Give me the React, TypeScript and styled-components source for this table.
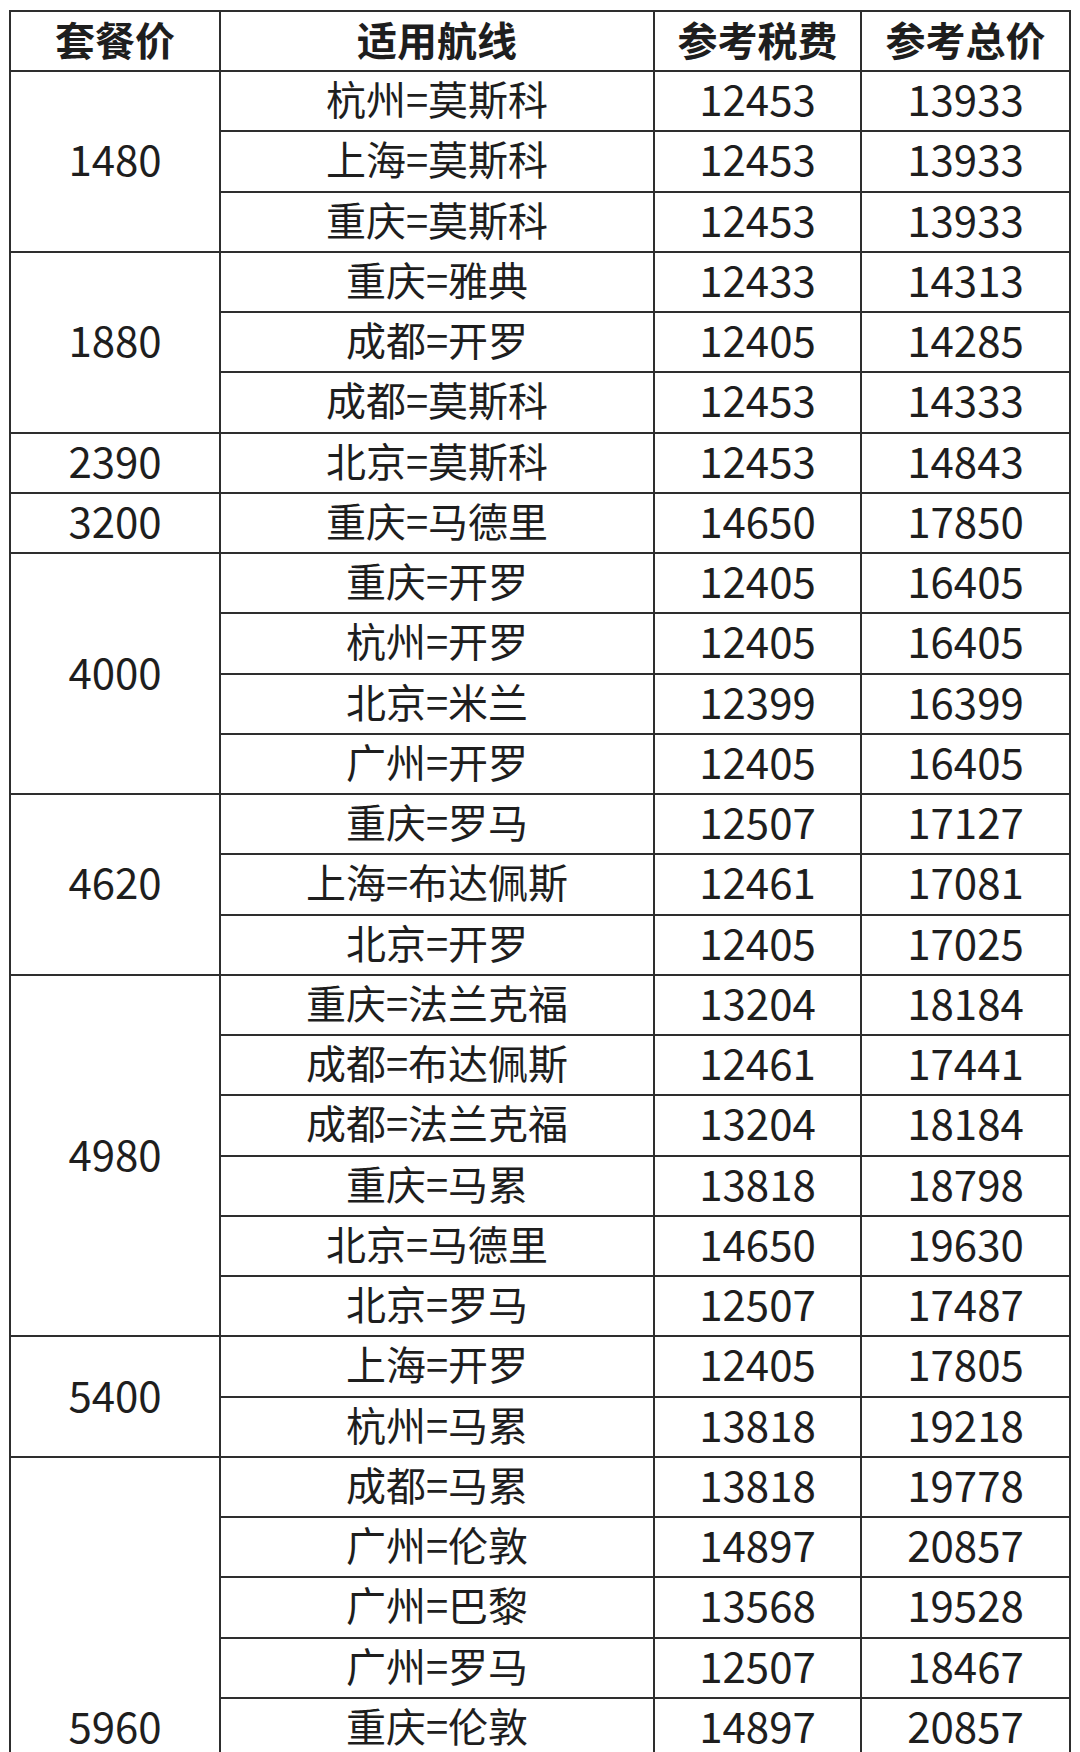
import React, { FunctionComponent } from 'react';
import styled, { createGlobalStyle } from 'styled-components';

type Route = { route: string; tax: number; total: number };
type Group = { price: number; span?: number; routes: Route[] };

const groups: Group[] = [
  {
    price: 1480,
    routes: [
      { route: '杭州=莫斯科', tax: 12453, total: 13933 },
      { route: '上海=莫斯科', tax: 12453, total: 13933 },
      { route: '重庆=莫斯科', tax: 12453, total: 13933 },
    ],
  },
  {
    price: 1880,
    routes: [
      { route: '重庆=雅典', tax: 12433, total: 14313 },
      { route: '成都=开罗', tax: 12405, total: 14285 },
      { route: '成都=莫斯科', tax: 12453, total: 14333 },
    ],
  },
  { price: 2390, routes: [{ route: '北京=莫斯科', tax: 12453, total: 14843 }] },
  { price: 3200, routes: [{ route: '重庆=马德里', tax: 14650, total: 17850 }] },
  {
    price: 4000,
    routes: [
      { route: '重庆=开罗', tax: 12405, total: 16405 },
      { route: '杭州=开罗', tax: 12405, total: 16405 },
      { route: '北京=米兰', tax: 12399, total: 16399 },
      { route: '广州=开罗', tax: 12405, total: 16405 },
    ],
  },
  {
    price: 4620,
    routes: [
      { route: '重庆=罗马', tax: 12507, total: 17127 },
      { route: '上海=布达佩斯', tax: 12461, total: 17081 },
      { route: '北京=开罗', tax: 12405, total: 17025 },
    ],
  },
  {
    price: 4980,
    routes: [
      { route: '重庆=法兰克福', tax: 13204, total: 18184 },
      { route: '成都=布达佩斯', tax: 12461, total: 17441 },
      { route: '成都=法兰克福', tax: 13204, total: 18184 },
      { route: '重庆=马累', tax: 13818, total: 18798 },
      { route: '北京=马德里', tax: 14650, total: 19630 },
      { route: '北京=罗马', tax: 12507, total: 17487 },
    ],
  },
  {
    price: 5400,
    routes: [
      { route: '上海=开罗', tax: 12405, total: 17805 },
      { route: '杭州=马累', tax: 13818, total: 19218 },
    ],
  },
  {
    // the table runs on past the bottom of the screen, so the merged
    // cell covers more rows than are visible
    price: 5960,
    span: 9,
    routes: [
      { route: '成都=马累', tax: 13818, total: 19778 },
      { route: '广州=伦敦', tax: 14897, total: 20857 },
      { route: '广州=巴黎', tax: 13568, total: 19528 },
      { route: '广州=罗马', tax: 12507, total: 18467 },
      { route: '重庆=伦敦', tax: 14897, total: 20857 },
    ],
  },
];

const App: FunctionComponent = () => (
  <Page>
    <GlobalStyle />
    <Table>
      <colgroup>
        <col style={{ width: 210 }} />
        <col style={{ width: 434 }} />
        <col style={{ width: 207 }} />
        <col style={{ width: 209 }} />
      </colgroup>
      <thead>
        <HeadRow>
          <Head>套餐价</Head>
          <Head>适用航线</Head>
          <Head>参考税费</Head>
          <Head>参考总价</Head>
        </HeadRow>
      </thead>
      <tbody>
        {groups.map((group) => {
          const span = group.span ?? group.routes.length;
          const filler = span - group.routes.length;
          return (
            <React.Fragment key={group.price}>
              {group.routes.map((item, index) => (
                <Row key={item.route}>
                  {index === 0 && (
                    <Cell rowSpan={span} $numeric>
                      {group.price}
                    </Cell>
                  )}
                  <Cell>{item.route}</Cell>
                  <Cell $numeric>{item.tax}</Cell>
                  <Cell $numeric>{item.total}</Cell>
                </Row>
              ))}
              {Array.from({ length: filler }, (_, index) => (
                <Row key={`filler-${index}`}>
                  <Cell />
                  <Cell />
                  <Cell />
                </Row>
              ))}
            </React.Fragment>
          );
        })}
      </tbody>
    </Table>
  </Page>
);

const GlobalStyle = createGlobalStyle`
  html, body {
    margin: 0;
    padding: 0;
    background: #ffffff;
  }
`;

const Page = styled.div`
  height: 1752px;
  overflow: hidden;
  padding: 10px 0 0 9px;
  box-sizing: border-box;
  background: #ffffff;
  font-family: 'Noto Sans CJK SC', 'Noto Sans', sans-serif;
  color: #1e1e1e;
`;

const Table = styled.table`
  width: 1060px;
  border-collapse: collapse;
  table-layout: fixed;
`;

const HeadRow = styled.tr`
  height: 60px;
`;

const Head = styled.th`
  padding: 0 0 5px;
  border: 2px solid #2e2e2e;
  font-size: 40px;
  font-weight: 700;
  line-height: 30px;
  text-align: center;
  vertical-align: middle;
`;

const Row = styled.tr`
  height: 60.25px;
`;

const Cell = styled.td<{ $numeric?: boolean }>`
  padding: 0 0 6px;
  border: 2px solid #2e2e2e;
  font-size: ${(props) => (props.$numeric ? 42 : 40)}px;
  font-weight: 400;
  line-height: 30px;
  text-align: center;
  vertical-align: middle;
  white-space: nowrap;
`;

export default App;
